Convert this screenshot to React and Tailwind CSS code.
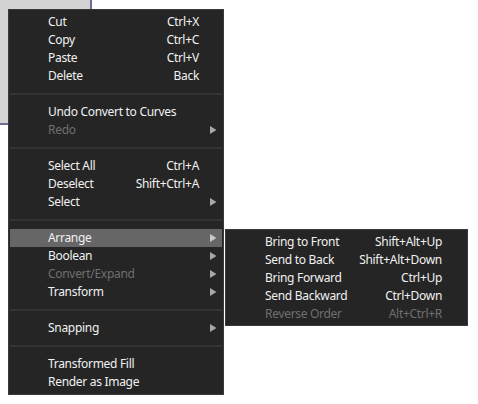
import { Fragment } from 'react'

const mainItems = [
    { label: 'Cut', keys: 'Ctrl+X' },
    { label: 'Copy', keys: 'Ctrl+C' },
    { label: 'Paste', keys: 'Ctrl+V' },
    { label: 'Delete', keys: 'Back' },
    'sep',
    { label: 'Undo Convert to Curves' },
    { label: 'Redo', disabled: true, sub: true },
    'sep',
    { label: 'Select All', keys: 'Ctrl+A' },
    { label: 'Deselect', keys: 'Shift+Ctrl+A' },
    { label: 'Select', sub: true },
    'sep',
    { label: 'Arrange', sub: true, active: true },
    { label: 'Boolean', sub: true },
    { label: 'Convert/Expand', sub: true, disabled: true },
    { label: 'Transform', sub: true },
    'sep',
    { label: 'Snapping', sub: true },
    'sep',
    { label: 'Transformed Fill' },
    { label: 'Render as Image' },
]

const arrangeItems = [
    { label: 'Bring to Front', keys: 'Shift+Alt+Up' },
    { label: 'Send to Back', keys: 'Shift+Alt+Down' },
    { label: 'Bring Forward', keys: 'Ctrl+Up' },
    { label: 'Send Backward', keys: 'Ctrl+Down' },
    { label: 'Reverse Order', keys: 'Alt+Ctrl+R', disabled: true },
]

function Arrow({ dim }) {
    return (
        <svg width="8" height="8" viewBox="0 0 8 8" className="block">
            <path d="M1 0 L7.5 4 L1 8 Z" fill={dim ? '#a8a8a8' : '#c8c8c8'} />
        </svg>
    )
}

function MenuRow({ item, tail }) {
    return (
        <div className={`
            flex items-center h-[18px] pl-[38px]
            ${item.active ? 'bg-[#666666]' : ''}
            ${item.disabled ? 'text-[#6f6f6f]' : 'text-[#f1f1f1]'}
        `}>
            <span className="flex-1 whitespace-nowrap">{item.label}</span>
            {item.keys && <span className="whitespace-nowrap">{item.keys}</span>}
            <div className={`${tail} flex items-center justify-end pr-[5px] h-full`}>
                {item.sub && <Arrow dim={!item.active} />}
            </div>
        </div>
    )
}

export default function App() {
    return (
        <div
            className="relative w-[478px] h-[404px] bg-white overflow-hidden text-[12px] leading-[18px] tracking-[-0.3px]"
            style={{ fontFamily: '"Noto Sans", "DejaVu Sans", sans-serif' }}
        >
            {/* Canvas panel behind the menu */}
            <div className="w-[92px] h-[125px] bg-[#d3d3d3] border-r-2 border-b-2 border-[#6f6c94]" />

            {/* Context menu */}
            <div className="absolute left-[8px] top-[9px] w-[216px] bg-[#252525] border border-[#3a3a3a] px-px py-[3px]">
                {mainItems.map((item, i) => (
                    <Fragment key={i}>
                        {item === 'sep' ? (
                            <div className="h-[18px] flex items-center">
                                <div className="w-full h-[2px] bg-[#333333]" />
                            </div>
                        ) : (
                            <MenuRow item={item} tail="w-[23px]" />
                        )}
                    </Fragment>
                ))}
            </div>

            {/* Arrange submenu */}
            <div className="absolute left-[225px] top-[229px] w-[243px] bg-[#252525] border border-[#3a3a3a] px-px pt-[3px] pb-[2px]">
                {arrangeItems.map((item, i) => (
                    <MenuRow key={i} item={item} tail="w-[24px]" />
                ))}
            </div>
        </div>
    )
}
